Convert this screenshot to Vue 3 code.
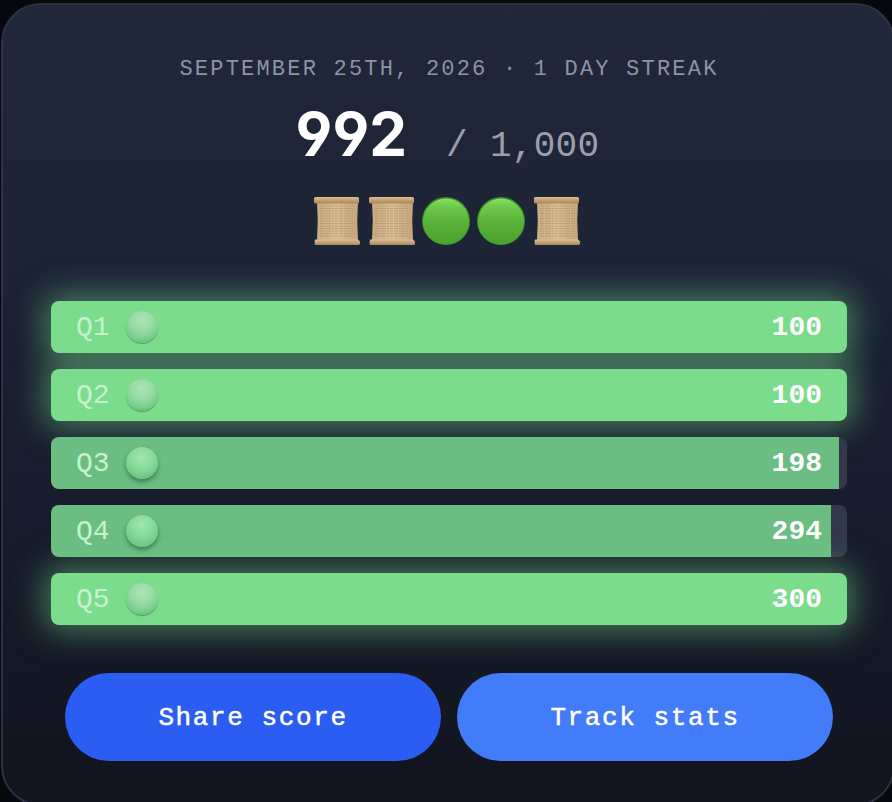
<template>
  <div class="page">
    <div class="card">
      <div class="date-line">SEPTEMBER 25TH, 2026 · 1 DAY STREAK</div>
      <div class="score-line">
        <span class="score">992</span>
        <span class="total">/ 1,000</span>
      </div>

      <div class="emoji-row">
        <template v-for="(kind, i) in emojis" :key="i">
          <svg v-if="kind === 'scroll'" class="emoji" viewBox="0 0 50 50">
            <defs>
              <linearGradient id="paper" x1="0" y1="0" x2="1" y2="0">
                <stop offset="0" stop-color="#c9ab82" />
                <stop offset="0.5" stop-color="#d9bd94" />
                <stop offset="1" stop-color="#c6a67c" />
              </linearGradient>
              <linearGradient id="roll" x1="0" y1="0" x2="0" y2="1">
                <stop offset="0" stop-color="#dcbf95" />
                <stop offset="1" stop-color="#a98558" />
              </linearGradient>
            </defs>
            <path d="M5 6Q6.5 25 5 44H46Q44.5 25 46 6Z" fill="url(#paper)" />
            <path
              v-for="y in lines"
              :key="y"
              :d="`M8 ${y}H43`"
              stroke="#a0805a"
              stroke-opacity="0.55"
              stroke-width="0.8"
              stroke-dasharray="4 1 6 1 2 1 3 1"
            />
            <rect x="2" y="1" width="45" height="6.5" rx="1.5" fill="url(#roll)" />
            <path d="M3 43.5H46L48 45.5V48L47 49H3L2.5 46Z" fill="url(#roll)" />
          </svg>
          <svg v-else class="emoji" viewBox="0 0 50 50">
            <defs>
              <linearGradient id="lime" x1="0" y1="0" x2="0" y2="1">
                <stop offset="0" stop-color="#8ce364" />
                <stop offset="0.16" stop-color="#6fcb4b" />
                <stop offset="0.55" stop-color="#58b038" />
                <stop offset="1" stop-color="#4aa22e" />
              </linearGradient>
            </defs>
            <circle cx="24" cy="25" r="24" fill="#3c9028" />
            <circle cx="24" cy="25.5" r="23" fill="url(#lime)" />
          </svg>
        </template>
      </div>

      <div class="rows">
        <div
          v-for="row in rows"
          :key="row.label"
          class="row"
          :class="{ perfect: row.pct === 100 }"
        >
          <div class="fill" :style="{ width: row.pct + '%' }"></div>
          <div class="row-left">
            <span class="q">{{ row.label }}</span>
            <span class="ball"></span>
          </div>
          <span class="points">{{ row.points }}</span>
        </div>
      </div>

      <div class="buttons">
        <button class="btn share">Share score</button>
        <button class="btn track">Track stats</button>
      </div>
    </div>
  </div>
</template>

<script setup>
const emojis = ['scroll', 'scroll', 'green', 'green', 'scroll']
const lines = [10, 12.5, 15, 17.5, 20, 22.5, 25, 27.5, 30, 32.5, 35, 37.5, 40]

const rows = [
  { label: 'Q1', points: 100, pct: 100 },
  { label: 'Q2', points: 100, pct: 100 },
  { label: 'Q3', points: 198, pct: 99 },
  { label: 'Q4', points: 294, pct: 98 },
  { label: 'Q5', points: 300, pct: 100 },
]
</script>

<style>
html,
body {
  margin: 0;
  background: #07080d;
}
</style>

<style scoped>
.page {
  width: 892px;
  height: 802px;
  padding: 3px 0 0 1px;
  box-sizing: border-box;
  overflow: hidden;
  background: #07080d;
  font-family: "Liberation Mono", monospace;
}

.card {
  width: 894px;
  height: 803px;
  box-sizing: border-box;
  padding: 51px 0 0 2px;
  border: 2px solid #2b3242;
  border-radius: 40px;
  background: linear-gradient(180deg, #1f2739 0%, #1c2436 30%, #161b2a 70%, #11141e 100%);
  display: flex;
  flex-direction: column;
  align-items: center;
}

.date-line {
  font-size: 22px;
  line-height: 28px;
  letter-spacing: 2.2px;
  color: #8d94a1;
}

.score-line {
  margin: 20px 3px 0 0;
  height: 60px;
  display: flex;
  align-items: baseline;
  gap: 39px;
}

.score {
  font-family: Inter, sans-serif;
  font-size: 60px;
  font-weight: 700;
  font-feature-settings: "ss01";
  color: #fff;
  line-height: 60px;
}

.total {
  font-size: 36px;
  line-height: 40px;
  letter-spacing: 0.3px;
  color: #9a9fa9;
}

.emoji-row {
  margin: 32px 4px 0 0;
  display: flex;
  gap: 5px;
}

.emoji {
  display: block;
  width: 50px;
  height: 50px;
}

.rows {
  margin-top: 55px;
  width: 796px;
  display: flex;
  flex-direction: column;
  gap: 16px;
}

.row {
  position: relative;
  height: 52px;
  border-radius: 8px;
  background: #323849;
  overflow: hidden;
  display: flex;
  align-items: center;
  justify-content: space-between;
  padding: 0 25px;
  box-sizing: border-box;
}

.row.perfect {
  overflow: visible;
  box-shadow: 0 0 32px 6px rgba(123, 220, 139, 0.5);
}

.fill {
  position: absolute;
  left: 0;
  top: 0;
  bottom: 0;
  background: #6bbd81;
}

.row.perfect .fill {
  background: #7bdc8b;
  border-radius: 8px;
}

.row-left {
  position: relative;
  display: flex;
  align-items: center;
  gap: 16px;
}

.q {
  font-size: 28px;
  color: #c6f2cf;
}

.ball {
  width: 32px;
  height: 32px;
  border-radius: 50%;
  background: radial-gradient(circle at 50% 30%, #aee3b8 0%, #95dca4 40%, #78cc8c 70%, #4f9e66 100%);
  box-shadow: 0 1px 1px rgba(40, 90, 55, 0.5);
}

.row:not(.perfect) .ball {
  background: radial-gradient(circle at 50% 32%, #a2e6b0 0%, #86da98 45%, #6ec583 78%, #50a068 100%);
  box-shadow: 0 3px 4px rgba(35, 85, 50, 0.6);
}

.points {
  position: relative;
  font-size: 28px;
  font-weight: 700;
  color: #fff;
}

.buttons {
  margin-top: 48px;
  display: flex;
  gap: 16px;
}

.btn {
  width: 376px;
  height: 88px;
  padding: 2px 0 0;
  border: none;
  border-radius: 44px;
  color: #fff;
  font-family: "Liberation Mono", monospace;
  font-size: 26px;
  letter-spacing: 1.6px;
  -webkit-text-stroke: 0.5px #fff;
}

.share {
  background: #2b5df2;
}

.track {
  background: #437cf9;
}
</style>
